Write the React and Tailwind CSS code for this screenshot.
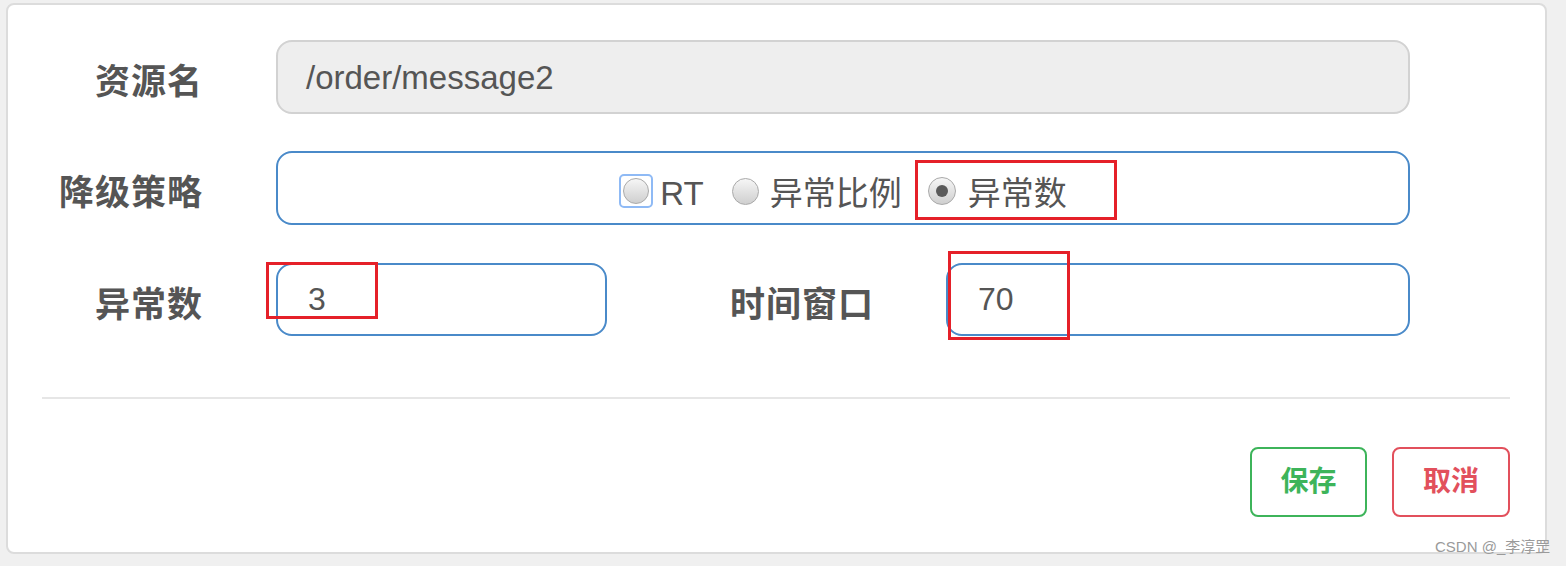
import React, { useState } from "react";

const FONT = { fontFamily: '"Liberation Sans", "Noto Sans CJK SC", sans-serif' };

const Radio = ({ checked, size = "w-[27px] h-[27px]" }) => (
  <span
    className={`${size} rounded-full border border-[#a9a9a9] bg-linear-to-b from-[#f6f6f6] to-[#cfcfcf] flex items-center justify-center shrink-0`}
  >
    {checked && <span className="w-[12px] h-[12px] rounded-full bg-[#5a5a5a]" />}
  </span>
);

const FieldLabel = ({ children, className = "" }) => (
  <div
    className={`shrink-0 whitespace-nowrap text-right text-[35px] font-bold text-[#555] leading-none tracking-[1px] pt-[9px] ${className}`}
  >
    {children}
  </div>
);

const App = () => {
  const [strategy, setStrategy] = useState("count");
  const [count, setCount] = useState("3");
  const [timeWindow, setTimeWindow] = useState("70");

  return (
    <div className="relative min-h-screen bg-[#f0f0f0] pt-[3px] pl-[6px]" style={FONT}>
      <div className="w-[1541px] h-[551px] bg-white border-2 border-[#dcdcdc] rounded-[8px] pt-[35px]">
        {/* resource name */}
        <div className="flex items-center">
          <FieldLabel className="w-[195px]">资源名</FieldLabel>
          <div className="ml-[73px] w-[1134px] h-[74px] bg-[#eeeeee] border-2 border-[#d2d2d2] rounded-[16px] flex items-center pl-[28px] pt-[2px] text-[33px] text-[#555]">
            /order/message2
          </div>
        </div>

        {/* degrade strategy */}
        <div className="flex items-center mt-[37px]">
          <FieldLabel className="w-[195px]">降级策略</FieldLabel>
          <div className="ml-[73px] w-[1134px] h-[74px] border-2 border-[#4a8ac9] rounded-[16px] flex items-center justify-center pt-[6px] text-[33px] text-[#555] leading-none">
            <label className="flex items-center cursor-pointer" onClick={() => setStrategy("rt")}>
              <span className="w-[34px] h-[34px] border-2 border-[#8fbaf5] rounded-[5px] flex items-center justify-center">
                <Radio checked={strategy === "rt"} size="w-[26px] h-[26px]" />
              </span>
              <span className="ml-[7px] pt-[4px]">RT</span>
            </label>
            <label className="flex items-center ml-[28px] cursor-pointer" onClick={() => setStrategy("ratio")}>
              <Radio checked={strategy === "ratio"} />
              <span className="ml-[11px] pt-[4px]">异常比例</span>
            </label>
            <label className="relative flex items-center ml-[26px] cursor-pointer" onClick={() => setStrategy("count")}>
              <Radio checked={strategy === "count"} size="w-[28px] h-[28px]" />
              <span className="ml-[12px] pt-[4px]">异常数</span>
              <span className="absolute left-[-13px] right-[-50px] top-[-13px] bottom-[-10px] border-[3px] border-[#e52029] pointer-events-none" />
            </label>
          </div>
        </div>

        {/* count + time window */}
        <div className="flex items-center mt-[38px]">
          <FieldLabel className="w-[195px]">异常数</FieldLabel>
          <div className="relative shrink-0 ml-[73px] w-[331px] h-[73px] border-2 border-[#4a8ac9] rounded-[16px]">
            <input
              value={count}
              onChange={(e) => setCount(e.target.value)}
              className="w-full h-full bg-transparent outline-none pl-[30px] text-[32px] text-[#555]"
            />
            <span className="absolute left-[-12px] top-[-3px] w-[112px] h-[57px] border-[3px] border-[#e52029] pointer-events-none" />
          </div>
          <FieldLabel className="ml-[123px] w-[143px]">时间窗口</FieldLabel>
          <div className="relative shrink-0 ml-[73px] w-[464px] h-[73px] border-2 border-[#4a8ac9] rounded-[16px]">
            <input
              value={timeWindow}
              onChange={(e) => setTimeWindow(e.target.value)}
              className="w-full h-full bg-transparent outline-none pl-[30px] text-[32px] text-[#555]"
            />
            <span className="absolute left-[0px] top-[-14px] w-[122px] h-[89px] border-[3px] border-[#e52029] pointer-events-none" />
          </div>
        </div>

        <div className="ml-[34px] w-[1468px] h-[2px] bg-[#e6e6e6] mt-[61px]" />

        {/* actions */}
        <div className="flex justify-end gap-[25px] pr-[35px] mt-[48px]">
          <button className="w-[117px] h-[70px] border-2 border-[#3db45a] rounded-[8px] text-[28px] font-bold text-[#3db45a]">
            保存
          </button>
          <button className="w-[118px] h-[70px] border-2 border-[#e2505c] rounded-[8px] text-[28px] font-bold text-[#e2505c]">
            取消
          </button>
        </div>
      </div>

      <div className="absolute left-[1435px] top-[539px] text-[15px] text-[#9a9a9a] leading-none">
        CSDN @_李淳罡
      </div>
    </div>
  );
};

export default App;
